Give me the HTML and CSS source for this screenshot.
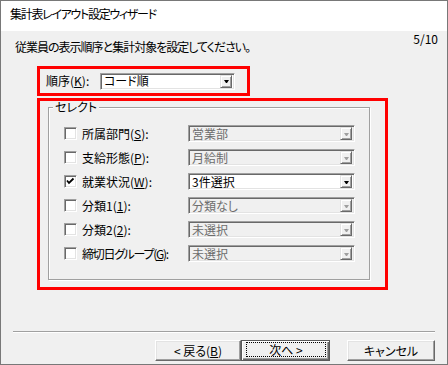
FILE: index.html
```html
<!DOCTYPE html>
<html lang="ja">
<head>
    <meta charset="UTF-8">
    <title>集計表レイアウト設定ウィザード</title>
    <link rel="stylesheet" href="styles.css">
</head>
<body>

    <div class="wizard">

        <div class="wizard-header">集計表レイアウト設定ウィザード</div>

        <div class="intro">
            <p class="intro-text">従業員の表示順序と集計対象を設定してください。</p>
            <span class="step">5/10</span>
        </div>

        <!-- 順序 -->
        <div class="mark mark-order">
            <span class="order-label">順序(<u>K</u>):</span>
            <div class="combo combo-order">
                <span class="combo-value">コード順</span>
                <span class="combo-btn"><i></i></span>
            </div>
        </div>

        <!-- セレクト -->
        <div class="mark mark-select">
            <div class="group">
                <span class="group-title">セレクト</span>
                <div class="rows">
                    <div class="row">
                        <span class="check"></span>
                        <span class="row-label">所属部門(<u>S</u>):</span>
                        <div class="combo combo-wide disabled">
                            <span class="combo-value">営業部</span>
                            <span class="combo-btn"><i></i></span>
                        </div>
                    </div>
                    <div class="row">
                        <span class="check"></span>
                        <span class="row-label">支給形態(<u>P</u>):</span>
                        <div class="combo combo-wide disabled">
                            <span class="combo-value">月給制</span>
                            <span class="combo-btn"><i></i></span>
                        </div>
                    </div>
                    <div class="row">
                        <span class="check checked">
                            <svg width="11" height="11" viewBox="0 0 11 11"><polyline points="2,4.5 4,7 8.5,2.5" fill="none" stroke="#000" stroke-width="1.8"/></svg>
                        </span>
                        <span class="row-label">就業状況(<u>W</u>):</span>
                        <div class="combo combo-wide">
                            <span class="combo-value">3件選択</span>
                            <span class="combo-btn"><i></i></span>
                        </div>
                    </div>
                    <div class="row">
                        <span class="check"></span>
                        <span class="row-label">分類1(<u>1</u>):</span>
                        <div class="combo combo-wide disabled">
                            <span class="combo-value">分類なし</span>
                            <span class="combo-btn"><i></i></span>
                        </div>
                    </div>
                    <div class="row">
                        <span class="check"></span>
                        <span class="row-label">分類2(<u>2</u>):</span>
                        <div class="combo combo-wide disabled">
                            <span class="combo-value">未選択</span>
                            <span class="combo-btn"><i></i></span>
                        </div>
                    </div>
                    <div class="row">
                        <span class="check"></span>
                        <span class="row-label row-label-long">締切日グループ(<u>G</u>):</span>
                        <div class="combo combo-wide disabled">
                            <span class="combo-value">未選択</span>
                            <span class="combo-btn"><i></i></span>
                        </div>
                    </div>
                </div>
            </div>
        </div>

        <div class="separator"></div>

        <div class="buttons">
            <button class="btn btn-back">&lt; 戻る(<u>B</u>)</button>
            <button class="btn btn-next"><span class="focus">次へ &gt;</span></button>
            <button class="btn btn-cancel">キャンセル</button>
        </div>

    </div>

</body>
</html>
```

FILE: styles.css
```css
/* ウィザード全体 */
body {
    margin: 0;
    font-family: "Noto Sans CJK JP", "Noto Sans", sans-serif;
    font-size: 12px;
    line-height: 12px;
    font-feature-settings: "palt";
    color: #000;
}

.wizard {
    box-sizing: border-box;
    width: 448px;
    height: 365px;
    border: 1px solid #787878;
    background-color: #f0f0f0;
}

.wizard-header {
    box-sizing: border-box;
    height: 30px;
    padding: 7px 0 0 9px;
    letter-spacing: -1.3px;
    background-color: #fff;
}

.intro {
    display: flex;
    justify-content: space-between;
    align-items: flex-start;
    height: 35px;
    padding: 0 9px 0 14px;
}

.intro-text {
    margin: 10px 0 0;
    letter-spacing: -1px;
}

.step {
    margin-top: 2px;
}

/* 赤枠 */
.mark {
    box-sizing: border-box;
    margin-left: 36px;
    border: 3px solid #ff0000;
}

.mark-order {
    display: flex;
    align-items: center;
    width: 213px;
    height: 30px;
    padding-left: 6px;
}

.order-label {
    width: 54px;
}

.mark-select {
    width: 351px;
    height: 192px;
    margin-top: 2px;
    padding: 6px 0 0 8px;
}

u {
    text-underline-offset: 1px;
}

/* コンボボックス */
.combo {
    box-sizing: border-box;
    display: flex;
    align-items: center;
    height: 17px;
    padding: 2px;
    background-color: #fff;
    border: 1px solid;
    border-color: #a0a0a0 #fff #fff #a0a0a0;
    box-shadow: inset 1px 1px #696969, inset -1px -1px #e3e3e3;
}

.combo-order {
    width: 135px;
}

.combo-wide {
    width: 167px;
}

.combo-value {
    flex: 1;
    padding-left: 1px;
    white-space: nowrap;
}

.combo-btn {
    box-sizing: border-box;
    display: flex;
    align-items: center;
    justify-content: center;
    width: 12px;
    height: 13px;
    background-color: #f0f0f0;
    border: 1px solid;
    border-color: #e3e3e3 #696969 #696969 #e3e3e3;
    box-shadow: inset 1px 1px #fff, inset -1px -1px #a0a0a0;
}

.combo-btn i {
    display: block;
    width: 1px;
    height: 0;
    margin-top: 1px;
    border-left: 2px solid transparent;
    border-right: 2px solid transparent;
    border-top: 3px solid #000;
}

.combo.disabled {
    background-color: #f0f0f0;
    color: #6d6d6d;
}

.combo.disabled .combo-btn i {
    border-top-color: #a0a0a0;
}

/* グループボックス */
.group {
    box-sizing: border-box;
    width: 322px;
    height: 173px;
    border: 1px solid #a0a0a0;
    box-shadow: inset 1px 1px #fff, 1px 1px #fff;
}

.group-title {
    display: block;
    width: fit-content;
    margin: -7px 0 0 4px;
    padding: 0 2px;
    background-color: #f0f0f0;
}

.rows {
    margin-top: 12px;
    padding-left: 15px;
}

.row {
    display: flex;
    align-items: center;
    height: 17px;
    margin-bottom: 7px;
}

.check {
    box-sizing: border-box;
    display: flex;
    align-items: center;
    justify-content: center;
    width: 13px;
    height: 13px;
    margin-right: 5px;
    background-color: #fff;
    border: 1px solid;
    border-color: #a0a0a0 #fff #fff #a0a0a0;
    box-shadow: inset 1px 1px #696969, inset -1px -1px #e3e3e3;
}

.row-label {
    width: 106px;
    white-space: nowrap;
}

.row-label-long {
    letter-spacing: -1.3px;
}

/* 下部ボタン */
.separator {
    width: 422px;
    height: 1px;
    margin: 41px 0 0 12px;
    background-color: #a0a0a0;
    border-bottom: 1px solid #fff;
}

.buttons {
    display: flex;
    margin-top: 7px;
    padding-left: 154px;
}

.btn {
    box-sizing: border-box;
    display: flex;
    align-items: center;
    justify-content: center;
    height: 21px;
    padding: 0;
    font-family: inherit;
    font-size: 12px;
    line-height: 12px;
    font-feature-settings: "palt";
    color: #000;
    background-color: #f0f0f0;
    border: 1px solid;
    border-color: #fff #696969 #696969 #fff;
    box-shadow: inset -1px -1px #a0a0a0, inset 1px 1px #e3e3e3;
}

.btn-back {
    width: 86px;
}

.btn-next {
    width: 89px;
    margin-right: 17px;
    align-items: stretch;
    border: 1px solid #5a5a5a;
    box-shadow: inset 1px 1px #fff, inset -1px -1px #696969, inset -2px -2px #a0a0a0;
}

.btn-next .focus {
    flex: 1;
    display: flex;
    align-items: center;
    justify-content: center;
    margin: 1px 3px 3px 4px;
    border: 1px dotted #000;
}

.btn-cancel {
    width: 88px;
}
```
